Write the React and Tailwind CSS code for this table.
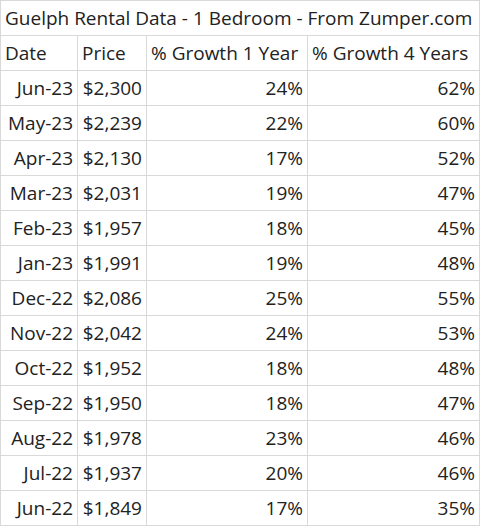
import React from 'react';

const rows = [
  ['Jun-23', '$2,300', '24%', '62%'],
  ['May-23', '$2,239', '22%', '60%'],
  ['Apr-23', '$2,130', '17%', '52%'],
  ['Mar-23', '$2,031', '19%', '47%'],
  ['Feb-23', '$1,957', '18%', '45%'],
  ['Jan-23', '$1,991', '19%', '48%'],
  ['Dec-22', '$2,086', '25%', '55%'],
  ['Nov-22', '$2,042', '24%', '53%'],
  ['Oct-22', '$1,952', '18%', '48%'],
  ['Sep-22', '$1,950', '18%', '47%'],
  ['Aug-22', '$1,978', '23%', '46%'],
  ['Jul-22', '$1,937', '20%', '46%'],
  ['Jun-22', '$1,849', '17%', '35%'],
];

const cell = 'h-[35px] border-b border-r border-[#d9d9d9] flex items-center px-[4px] whitespace-nowrap';

export default function App() {
  return (
    <div className="bg-white w-[481px] h-[526px] text-[#222] font-['Open_Sans',sans-serif] text-[19px]">
      <div className="grid grid-cols-[77px_69px_161px_172px] w-[480px] border-t border-l border-[#d9d9d9]">
        {/* title row */}
        <div className={`${cell} col-span-4`}>Guelph Rental Data - 1 Bedroom - From Zumper.com</div>

        {/* header */}
        <div className={cell}>Date</div>
        <div className={cell}>Price</div>
        <div className={cell}>% Growth 1 Year</div>
        <div className={cell}>% Growth 4 Years</div>

        {rows.map((r) => (
          <React.Fragment key={r[0]}>
            <div className={`${cell} justify-end`}>{r[0]}</div>
            <div className={`${cell} justify-end`}>{r[1]}</div>
            <div className={`${cell} justify-end`}>{r[2]}</div>
            <div className={`${cell} justify-end`}>{r[3]}</div>
          </React.Fragment>
        ))}
      </div>
    </div>
  );
}
